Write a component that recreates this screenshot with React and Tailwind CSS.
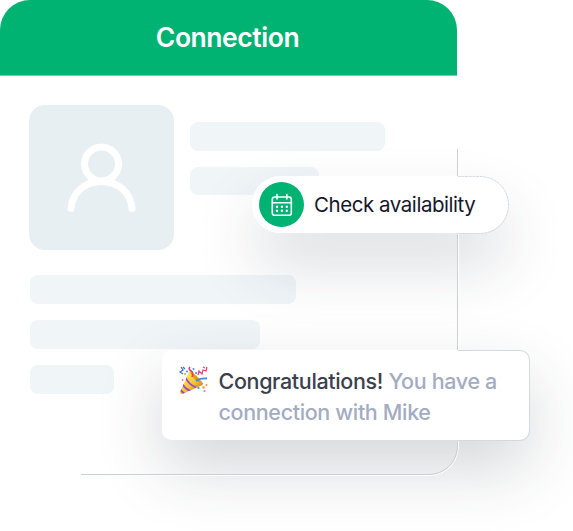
function PersonIcon() {
  return (
    <svg width="145" height="145" viewBox="0 0 145 145" fill="none" stroke="white" strokeWidth="7" strokeLinecap="round">
      <circle cx="72.5" cy="59" r="17" />
      <path d="M42 103.3C43.5 87.500 56 76.500 72.500 76.500S101.500 87.500 103 103.300" />
    </svg>
  );
}

function CalendarIcon() {
  return (
    <svg width="22" height="24" viewBox="0 0 22 24" fill="none" stroke="white" strokeWidth="1.6" strokeLinecap="round">
      <rect x="1.300" y="4" width="19" height="18.200" rx="2.300" />
      <path d="M1.500 9.700H20.300M6 1.500V6M15.800 1.500V6" />
      <g fill="white" stroke="none">
        <circle cx="6" cy="13.800" r="1.200" />
        <circle cx="10.900" cy="13.800" r="1.200" />
        <circle cx="15.800" cy="13.800" r="1.200" />
        <circle cx="6" cy="17.800" r="1.200" />
        <circle cx="10.900" cy="17.800" r="1.200" />
        <circle cx="15.800" cy="17.800" r="1.200" />
      </g>
    </svg>
  );
}

function PartyIcon() {
  return (
    <svg width="30" height="30" viewBox="0 0 30 30" fill="none">
      <defs>
        <linearGradient id="cone" x1="6" y1="12" x2="17" y2="25" gradientUnits="userSpaceOnUse">
          <stop stopColor="#ffe04a" />
          <stop offset="0.6" stopColor="#f3c038" />
          <stop offset="1" stopColor="#c78a22" />
        </linearGradient>
        <clipPath id="coneShape">
          <path d="M10.300 5.500L1 26Q1 28.500 4 27.800L23.500 19Q24 16 19 11T10.300 5.500Z" />
        </clipPath>
      </defs>
      <path d="M10.300 5.500L1 26Q1 28.500 4 27.800L23.500 19Q24 16 19 11T10.300 5.500Z" fill="url(#cone)" />
      <g clipPath="url(#coneShape)" stroke="#9848c8" strokeWidth="1.7">
        <path d="M6.500 11Q9 18 17 21.500M3.500 18Q6 23 12 25M1 23Q3 26 6 28" />
      </g>
      <path d="M11 6Q18 9 22.500 17Q15 15 11 6Z" fill="#d39b26" />
      <path d="M13 11Q15 7 12 5Q9 3 11 1" stroke="#e43d66" strokeWidth="1.600" />
      <path d="M17 15Q21 12 28 12.500" stroke="#4388dc" strokeWidth="1.800" />
      <path d="M2 1L4 4L1 6L4 8M4 1L6 3" stroke="#3575cf" strokeWidth="1.300" />
      <path d="M19 9L20 5L23 8L24 4L27 5L28 1M24 1L26 2" stroke="#e8477c" strokeWidth="1.300" />
      <g fill="#3e8ee4">
        <circle cx="14.500" cy="3" r="1" />
        <circle cx="17" cy="7" r="1.100" />
        <circle cx="8" cy="5.500" r="1" />
        <circle cx="19.500" cy="22" r="1.100" />
      </g>
      <g fill="#ef9a35">
        <circle cx="24.500" cy="21.500" r="1.200" />
        <circle cx="27.500" cy="19" r="1" />
        <circle cx="6" cy="8" r="1" />
      </g>
      <g fill="#ed76a8">
        <circle cx="25.500" cy="25" r="1.100" />
        <circle cx="3.500" cy="14" r="1" />
        <circle cx="23" cy="17.500" r="1" />
      </g>
    </svg>
  );
}

function CardEdge() {
  return (
    <svg className="absolute left-0 top-0" width="573" height="531" fill="none">
      <path d="M458.500 148V176M458.500 234V350M458.500 441V445C458.500 463 446 475.500 428 475.500H82" stroke="white" />
      <path d="M457.500 149V176M457.500 234V350M457.500 441V445C457.500 462 445 474.500 428 474.500H81" stroke="#c9cfd5" />
      <path d="M458 176.500H480C496 176.500 508.500 189 508.500 205S496 233.500 480 233.500H458" stroke="#d6dce0" strokeDasharray="3 .6" />
      <path d="M458 350.500H519Q529.500 350.500 529.500 361V430Q529.500 440.500 519 440.500H458" stroke="#d3d9de" />
    </svg>
  );
}

export default function App() {
  return (
    <main className="relative h-[531px] w-[573px] overflow-hidden bg-white font-[Inter,'Liberation_Sans',sans-serif]">
      <section className="h-[475px] w-[457px] overflow-hidden rounded-[30px] bg-white">
        <header className="flex h-[76px] items-center justify-center border-b border-[#66d1ab] bg-[#00b373] pb-px pr-[2px]">
          <h1 className="text-[26.500px] font-semibold leading-8 tracking-[-0.450px] text-white">Connection</h1>
        </header>
        <div className="flex gap-4 pl-[29px] pt-[29px]">
          <div className="size-[145px] rounded-[16px] bg-[#e7eff2]">
            <PersonIcon />
          </div>
          <div className="flex flex-col gap-4 pt-[17px]">
            <div className="h-[28.500px] w-[195px] rounded-lg bg-[#f0f5f8]" />
            <div className="h-[28.500px] w-[129px] rounded-lg bg-[#f0f5f8]" />
          </div>
        </div>
        <div className="flex flex-col gap-[16px] pl-[30px] pt-[25px]">
          <div className="h-[29px] w-[266px] rounded-lg bg-[#f0f5f8]" />
          <div className="h-[29px] w-[230px] rounded-lg bg-[#f0f5f8]" />
          <div className="h-[29px] w-[84px] rounded-lg bg-[#f0f5f8]" />
        </div>
      </section>

      <div className="absolute left-[252px] top-[176px] h-[57px] w-[256px] rounded-full shadow-[0_32px_62px_rgba(38,50,67,0.17)]" />
      <div className="absolute left-[162px] top-[350px] h-[90px] w-[367px] rounded-[10px] shadow-[0_28px_66px_rgba(38,50,67,0.20)]" />

      <div className="absolute left-[252px] top-[176px] flex h-[57px] w-[256px] items-center gap-[10px] rounded-full bg-white pl-[7px]">
        <div className="flex size-[45px] shrink-0 items-center justify-center rounded-full bg-[#00b373]">
          <CalendarIcon />
        </div>
        <span className="whitespace-nowrap text-[20.500px] leading-7 tracking-[-0.450px] text-[#17172b]">Check availability</span>
      </div>

      <div className="absolute left-[162px] top-[350px] flex h-[90px] w-[367px] rounded-[10px] bg-white pl-[16.500px] pt-[16px]">
        <PartyIcon />
        <p className="ml-[10px] whitespace-nowrap text-[21.500px] font-medium leading-[31px] tracking-[-0.350px] text-[#a3acc1]">
          <span className="text-[#3b404d]">Congratulations!</span> You have a<br />connection with Mike
        </p>
      </div>
      <CardEdge />
    </main>
  );
}
